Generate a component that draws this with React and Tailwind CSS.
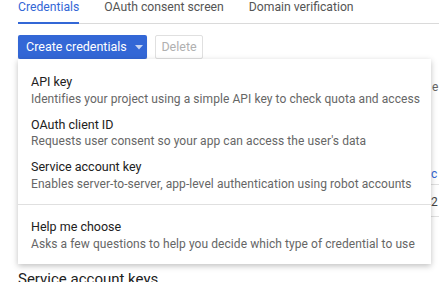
import React from "react";

export default function App() {
  const items = [
    ["API key", "Identifies your project using a simple API key to check quota and access"],
    ["OAuth client ID", "Requests user consent so your app can access the user's data"],
    ["Service account key", "Enables server-to-server, app-level authentication using robot accounts"],
  ];
  return (
    <div
      className="relative w-[439px] h-[282px] overflow-hidden bg-white text-[#212121]"
      style={{ fontFamily: "Roboto, 'Noto Sans', sans-serif" }}
    >
      <div className="-mt-[1px] ml-[18px] flex h-[25px] items-stretch gap-[25px] border-b border-[#dadada] text-[12.2px] leading-[16px]">
        <div className="flex flex-col justify-between text-[#3367d6]">
          <span>Credentials</span>
          <div className="h-[2px] bg-[#3367d6] -mb-px"></div>
        </div>
        <span className="text-[#555]">OAuth consent screen</span>
        <span className="text-[#555]">Domain verification</span>
      </div>

      <div className="ml-[18px] mt-[11px] flex gap-2">
        <button className="flex h-[24px] w-[129px] items-center rounded-[2px] bg-[#3367d6] pl-[8px] text-white shadow-[0_1px_1px_rgba(0,0,0,0.2)]">
          <span className="text-[12.5px]">Create credentials</span>
          <svg className="ml-[8px]" width="8" height="5" viewBox="0 0 8 5">
            <path d="M0 0 L8 0 L4 4.5 Z" fill="#c6d4f3" />
          </svg>
        </button>
        <button className="flex h-[24px] w-[48px] items-center justify-center rounded-[2px] border border-[#e0e0e0] text-[12.5px] text-[#b0b0b0]">
          Delete
        </button>
      </div>

      {/* background content peeking behind menu */}
      <div className="absolute left-[432px] top-[78px] text-[12px] text-[#666]">e</div>
      <div className="absolute left-[431px] top-[165px] text-[12px] text-[#3367d6]">c</div>
      <div className="absolute left-[300px] top-[184px] w-[139px] border-t border-[#e0e0e0]"></div>
      <div className="absolute left-[431px] top-[193px] text-[12px] text-[#444]">2</div>
      <div className="absolute left-[300px] top-[216px] w-[139px] border-t border-[#e0e0e0]"></div>
      <div className="absolute left-[18px] top-[268px] text-[15px] text-[#212121]">Service account keys</div>

      <div className="absolute left-[18px] top-[59px] w-[413px] whitespace-nowrap bg-white shadow-[0_2px_6px_rgba(0,0,0,0.25)] text-[12px] leading-[17.5px] tracking-[0.07px]">
        <div className="pt-[10px] pb-[7.5px]">
          {items.map(([t, d]) => (
            <div key={t} className="px-[13px] pt-[4px] pb-[3.5px]">
              <div className="text-[12.5px] tracking-normal text-[#212121]">{t}</div>
              <div className="text-[#666]">{d}</div>
            </div>
          ))}
        </div>
        <div className="border-t border-[#e0e0e0]"></div>
        <div className="pt-[9px] pb-[7px]">
          <div className="px-[13px] pt-[4px] pb-[3.5px]">
            <div className="text-[12.5px] tracking-normal text-[#212121]">Help me choose</div>
            <div className="text-[#666]">Asks a few questions to help you decide which type of credential to use</div>
          </div>
        </div>
      </div>
    </div>
  );
}
